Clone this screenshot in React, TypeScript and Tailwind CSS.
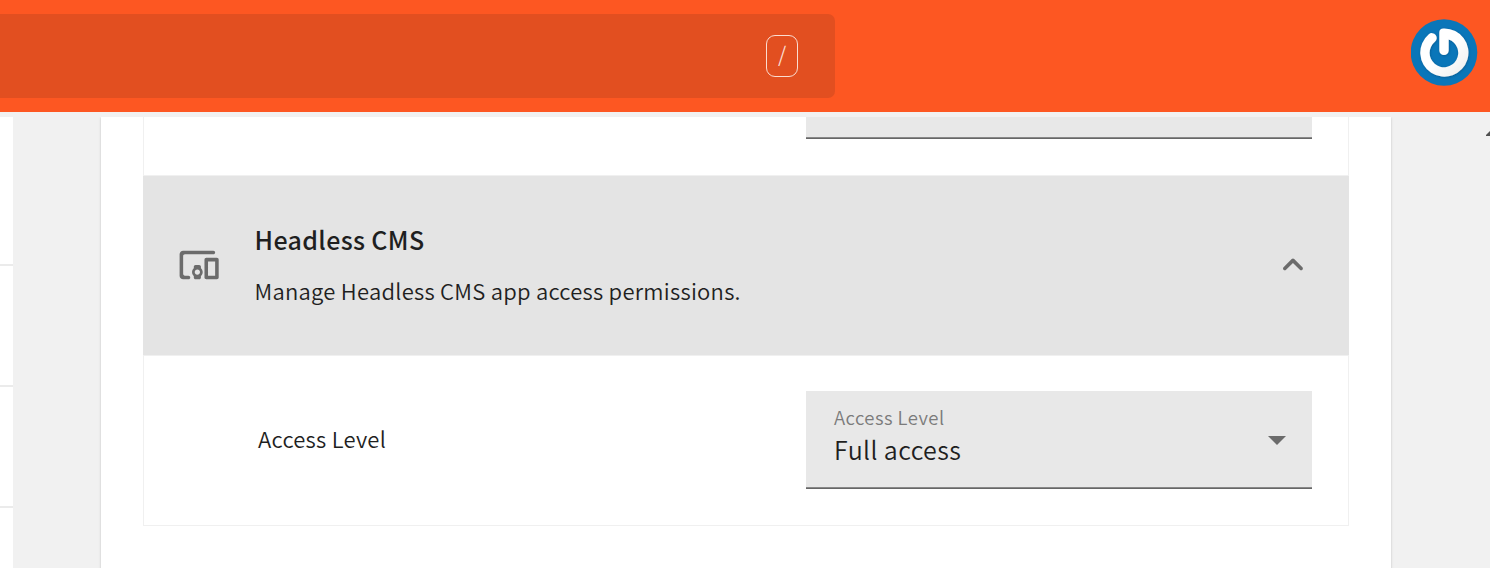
const font = "font-['Noto_Sans_CJK_SC','Noto_Sans_CJK_JP',sans-serif]";

function Avatar() {
  return (
    <svg className="mr-[12px] mt-[18px] h-[69px] w-[67px] shrink-0" viewBox="0 0 67 69">
      <defs>
        <filter id="soft" x="-20%" y="-20%" width="140%" height="140%">
          <feDropShadow dx="0.5" dy="0.7" stdDeviation="0.9" floodColor="#033a66" floodOpacity="0.5" />
        </filter>
        <linearGradient id="ring" x1="0" y1="0" x2="1" y2="1">
          <stop offset="0.5" stopColor="#ffffff" />
          <stop offset="1" stopColor="#ececec" />
        </linearGradient>
      </defs>
      <circle cx="33" cy="34.5" r="33.3" fill="#0a76b9" />
      <path
        filter="url(#soft)"
        fill="url(#ring)"
        d="M17.8 16.2A4.85 4.85 0 0 1 23.9 23.8A14.3 14.3 0 1 0 37.7 21.4V32.4A4.7 4.7 0 0 1 28.3 32.4V14.4C28.3 11.4 30.2 10.2 33.4 10.5A24.1 24.1 0 1 1 17.8 16.2Z"
      />
    </svg>
  );
}

function DevicesIcon() {
  return (
    <svg className="h-[43px] w-[43px]" viewBox="0.1 0.2 24.2 24.2" fill="#6b6b6b">
      <path d="M3 7c0-.55.45-1 1-1h16c.55 0 1-.45 1-1s-.45-1-1-1H3c-1.1 0-2 .9-2 2v12c0 1.1.9 2 2 2h3c.55 0 1-.45 1-1s-.45-1-1-1H4c-.55 0-1-.45-1-1V7zm9 5h-2c-.55 0-1 .45-1 1v.78c-.61.55-1 1.33-1 2.22s.39 1.67 1 2.22V19c0 .55.45 1 1 1h2c.55 0 1-.45 1-1v-.78c.61-.55 1-1.34 1-2.22s-.39-1.67-1-2.22V13c0-.55-.45-1-1-1zm-1 5.5c-.83 0-1.5-.67-1.5-1.5s.67-1.5 1.5-1.5 1.5.67 1.5 1.5-.67 1.5-1.5 1.5zM22 8h-6c-.5 0-1 .5-1 1v10c0 .5.5 1 1 1h6c.5 0 1-.5 1-1V9c0-.5-.5-1-1-1zm-1 10h-4v-8h4v8z" />
    </svg>
  );
}

function ChevronUp() {
  return (
    <svg className="mr-[34px] h-[43px] w-[43px]" viewBox="0.2 0.2 24.2 24.2" fill="#6b6b6b">
      <path d="M11.29 8.71L6.7 13.3c-.39.39-.39 1.02 0 1.41.39.39 1.02.39 1.41 0L12 10.83l3.88 3.88c.39.39 1.02.39 1.41 0 .39-.39.39-1.02 0-1.41L12.7 8.71c-.38-.39-1.02-.39-1.41 0z" />
    </svg>
  );
}

function TopBar() {
  return (
    <header className="flex h-[112px] shrink-0 items-start justify-between bg-[#fd5722]">
      <div className="mt-[14px] flex h-[84px] w-[835px] items-center justify-end rounded-r-[7px] bg-[#e24f20] pr-[37px]">
        <kbd className={`flex h-[42px] w-[32px] items-center justify-center rounded-[9px] border border-[#fbdcd0] pb-[6px] text-[21px] font-[350] leading-none text-[#fbdcd0] ${font}`}>
          /
        </kbd>
      </div>
      <Avatar />
    </header>
  );
}

function SideList() {
  return (
    <aside className="flex w-[13px] shrink-0 flex-col bg-white">
      <div className="h-[149px] border-b-2 border-[#ebebeb]" />
      <div className="h-[121px] border-b-2 border-[#ebebeb]" />
      <div className="h-[121px] border-b-2 border-[#ebebeb]" />
    </aside>
  );
}

function Select() {
  return (
    <div className="mb-px flex h-[98px] w-[506px] items-center justify-between border-b border-[#666] bg-[#e8e8e8] pl-[28px] pr-[26px] shadow-[inset_0_-1px_0_#888]">
      <div className="flex flex-col">
        <span className="mt-[-6px] text-[18.5px] font-[350] leading-[26px] tracking-[0.45px] text-[#7b7b7b]">Access Level</span>
        <span className="text-[25px] font-[350] leading-[39px] tracking-[0.4px] text-[#1f1f1f]">Full access</span>
      </div>
      <svg className="mt-[3px] h-[9px] w-[18px]" viewBox="0 0 18 9" fill="#6b6b6b">
        <path d="M0 0H18L9 9Z" />
      </svg>
    </div>
  );
}

function Permissions() {
  return (
    <section className="h-[409px] w-[1206px] border-x border-b border-[#f0f0f0]">
      <div className="flex h-[59px] items-start justify-end border-b border-[#f0f0f0] pr-[36px]">
        <div className="h-[22px] w-[506px] border-b border-[#666] bg-[#e8e8e8] shadow-[inset_0_-1px_0_#888]" />
      </div>
      <div className="-mx-px flex h-[179px] items-center justify-between bg-[#e4e4e4] pl-[34.5px]">
        <div className="flex items-center gap-[34px]">
          <DevicesIcon />
          <div className="flex flex-col pb-[2px]">
            <h2 className="text-[25px] font-medium leading-[50px] tracking-[0.35px] text-[#1f1f1f]">Headless CMS</h2>
            <p className="text-[22px] font-[350] leading-[52px] tracking-[0.26px] text-[#1f1f1f]">Manage Headless CMS app access permissions.</p>
          </div>
        </div>
        <ChevronUp />
      </div>
      <div className="flex h-[169px] items-center justify-between border-t border-[#f0f0f0] pl-[114px] pr-[36px]">
        <span className="pb-[4px] text-[22px] font-[350] leading-[32px] tracking-[0.26px] text-[#1f1f1f]">Access Level</span>
        <Select />
      </div>
    </section>
  );
}

export default function App() {
  return (
    <div className={`flex h-[568px] w-[1490px] flex-col overflow-hidden bg-[#f1f1f1] ${font}`}>
      <TopBar />
      <div className="mt-[5px] flex min-h-0 flex-1 overflow-hidden">
        <SideList />
        <main className="ml-[88px] h-[600px] w-[1290px] shrink-0 bg-white pl-[42px] shadow-[0_2px_1px_-1px_rgba(0,0,0,0.2),0_1px_1px_0_rgba(0,0,0,0.14),0_1px_3px_0_rgba(0,0,0,0.12)]">
          <Permissions />
        </main>
        <div className="flex flex-1 justify-end pt-[14px]">
          <svg className="h-[5px] w-[4px]" viewBox="0 0 4 5" fill="#505050">
            <path d="M0 5V4L4 0V5Z" />
          </svg>
        </div>
      </div>
    </div>
  );
}
